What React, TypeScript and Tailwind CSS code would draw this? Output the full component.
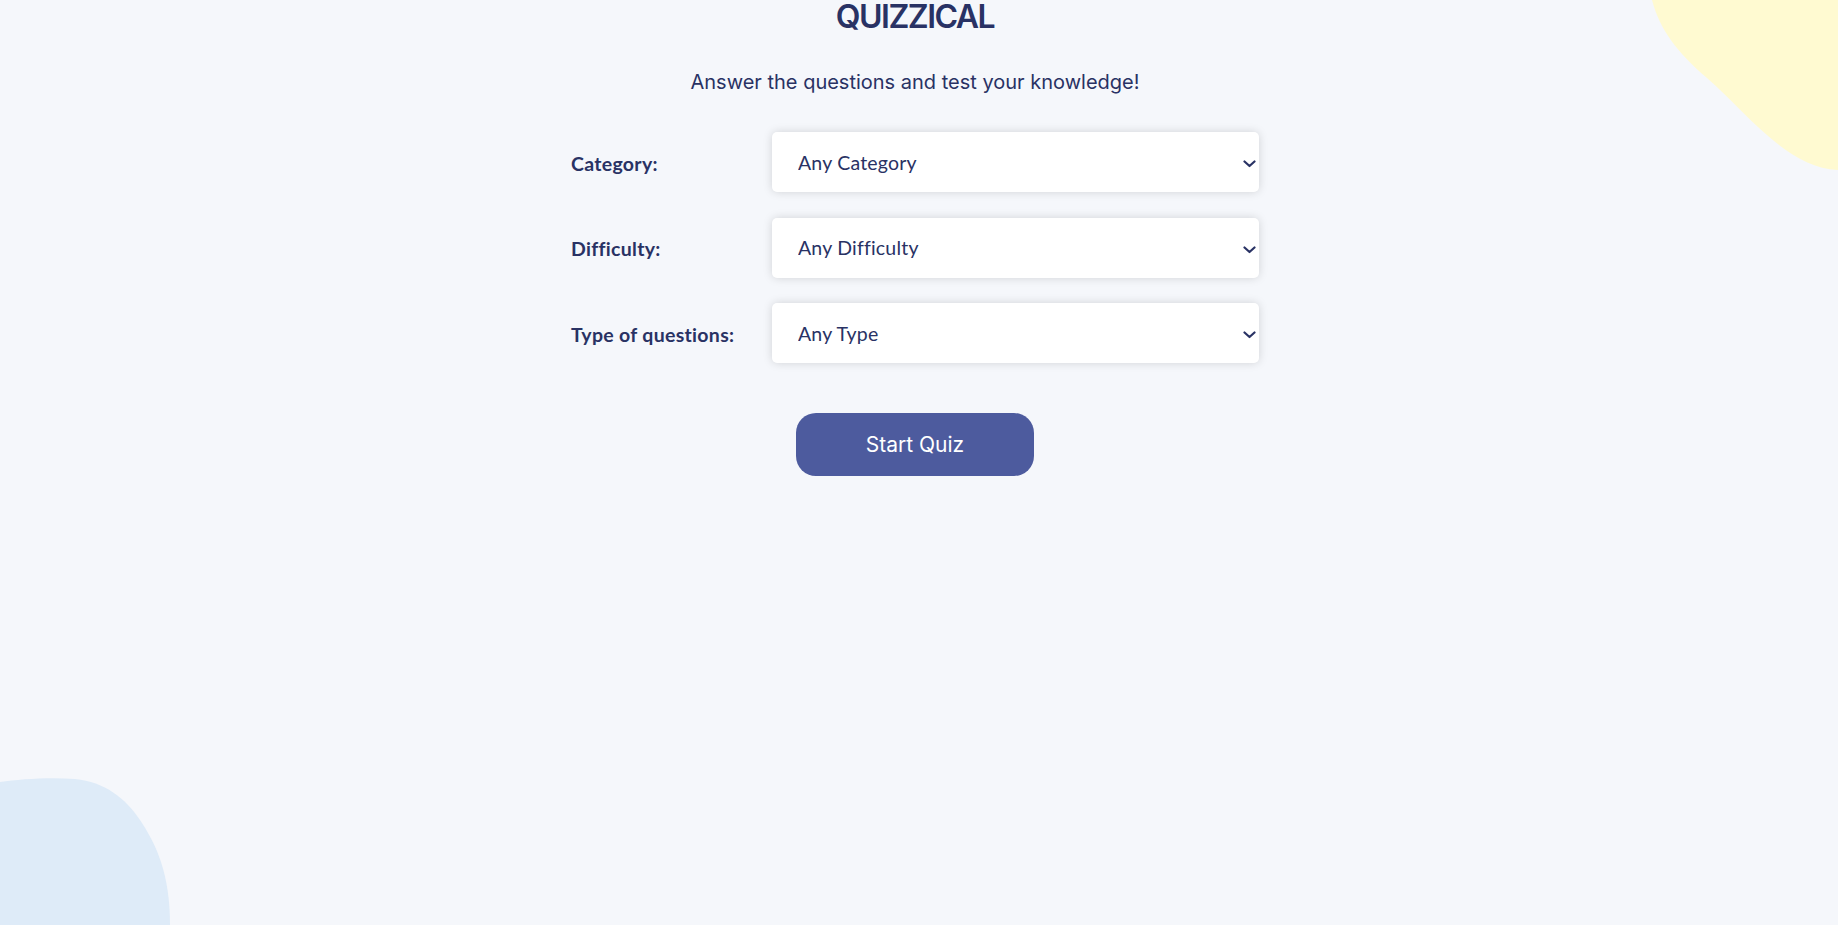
import React, { useState } from "react";

const labelFont = { fontFamily: "Lato, 'Open Sans', sans-serif" };

function Chevron() {
  return (
    <svg
      className="pointer-events-none absolute right-[3px] top-[28px]"
      width="13"
      height="8"
      viewBox="0 0 13 8"
      fill="none"
    >
      <path d="M1.5 1.5 L6.5 6 L11.5 1.5" stroke="#293264" strokeWidth="2.2" strokeLinecap="round" strokeLinejoin="round" />
    </svg>
  );
}

interface FieldProps {
  id: string;
  label: string;
  value: string;
  options: { value: string; label: string }[];
  onChange: (value: string) => void;
}

function Field({ id, label, value, options, onChange }: FieldProps) {
  return (
    <>
      <label
        htmlFor={id}
        className="pt-[3px] text-[19.5px] font-bold tracking-[0.3px] text-[#293264]"
        style={labelFont}
      >
        {label}
      </label>
      <div className="relative">
        <select
          id={id}
          value={value}
          onChange={(e) => onChange(e.currentTarget.value)}
          className="block h-[60px] w-full appearance-none rounded-[5px] bg-white pl-[26px] pr-8 pt-[1px] text-[19.5px] tracking-[0.2px] text-[#293264] shadow-[0_0_10px_rgba(0,0,0,0.15)] outline-none"
          style={labelFont}
        >
          {options.map((o) => (
            <option key={o.value} value={o.value}>
              {o.label}
            </option>
          ))}
        </select>
        <Chevron />
      </div>
    </>
  );
}

export default function App() {
  const [settings, setSettings] = useState({ category: "any", difficulty: "any", type: "any" });

  return (
    <main
      className="relative min-h-screen overflow-hidden bg-[#F5F7FB] text-[#293264]"
      style={{ fontFamily: "Inter, 'Open Sans', sans-serif" }}
    >
      {/* blobs */}
      <svg className="absolute right-0 top-0" width="186" height="171" viewBox="0 0 186 171">
        <path d="M0 0 C8 30 25 52 55 78 C95 113 135 168 186 170 L186 0 Z" fill="#FFFAD1" />
      </svg>
      <svg className="absolute bottom-0 left-0" width="171" height="147" viewBox="0 0 171 147">
        <path d="M0 4 C20 1 50 -1 75 1 C105 4 125 20 140 42 C156 66 170 95 170 147 L0 147 Z" fill="#DEEBF8" />
      </svg>

      <div className="relative flex flex-col items-center pr-2">
        <h1 className="pt-px text-[32px] font-semibold leading-none tracking-[-1.5px]">QUIZZICAL</h1>
        <p className="mt-[35px] text-[20px] leading-[28px]">Answer the questions and test your knowledge!</p>

        <form
          className="mt-[36px] grid w-[688px] grid-cols-[201px_487px] items-center gap-y-[25.5px]"
          onSubmit={(e) => e.preventDefault()}
        >
          <Field
            id="category"
            label="Category:"
            value={settings.category}
            onChange={(v) => setSettings({ ...settings, category: v })}
            options={[
              { value: "any", label: "Any Category" },
              { value: "9", label: "General Knowledge" },
              { value: "17", label: "Science & Nature" },
            ]}
          />
          <Field
            id="difficulty"
            label="Difficulty:"
            value={settings.difficulty}
            onChange={(v) => setSettings({ ...settings, difficulty: v })}
            options={[
              { value: "any", label: "Any Difficulty" },
              { value: "easy", label: "Easy" },
              { value: "medium", label: "Medium" },
              { value: "hard", label: "Hard" },
            ]}
          />
          <Field
            id="type"
            label="Type of questions:"
            value={settings.type}
            onChange={(v) => setSettings({ ...settings, type: v })}
            options={[
              { value: "any", label: "Any Type" },
              { value: "multiple", label: "Multiple Choice" },
              { value: "boolean", label: "True / False" },
            ]}
          />
        </form>

        <button className="mt-[50px] h-[63px] w-[238px] rounded-[20px] bg-[#4D5B9E] text-[21px] text-white hover:opacity-90">
          Start Quiz
        </button>
      </div>
    </main>
  );
}
